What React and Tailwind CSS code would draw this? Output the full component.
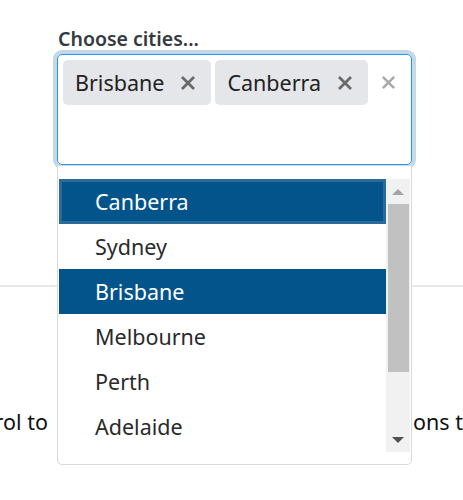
import React from "react";

const font = { fontFamily: '"Noto Sans", "Open Sans", sans-serif' };

function Cross({ size = 16, color = "#6b6b6b", sw = 2.6 }) {
  return (
    <svg width={size} height={size} viewBox="0 0 16 16">
      <path d="M2 2 L14 14 M14 2 L2 14" stroke={color} strokeWidth={sw} strokeLinecap="butt" />
    </svg>
  );
}

function Chip({ label }) {
  return (
    <div className="flex h-[45px] items-center rounded-[5px] bg-[#e4e6ea] pl-[12px] pr-[15px]">
      <span className="text-[21.5px] leading-none text-[#222]">{label}</span>
      <span className="ml-[16px] flex items-center">
        <Cross size={16} color="#6a6a6a" sw={2.8} />
      </span>
    </div>
  );
}

const items = [
  { name: "Canberra", sel: true, focus: true },
  { name: "Sydney" },
  { name: "Brisbane", sel: true },
  { name: "Melbourne" },
  { name: "Perth" },
  { name: "Adelaide" },
];

export default function App() {
  return (
    <div className="relative h-[500px] w-[463px] overflow-hidden bg-white" style={font}>
      <div className="pl-[57px] pt-[26px]">
        <div className="pl-[1px] text-[19.5px] font-semibold leading-[25px] text-[#343a40]">Choose cities...</div>
        <div className="mt-[3px] flex h-[111px] w-[355px] items-start rounded-[5px] border border-[#2196f3] p-[5px] shadow-[0_0_0_4px_#c4d8e7]">
          <div className="flex gap-[4px]">
            <Chip label="Brisbane" />
            <Chip label="Canberra" />
          </div>
          <div className="ml-[13px] flex h-[45px] items-center">
            <Cross size={15} color="#a8a8a8" sw={2.6} />
          </div>
        </div>
      </div>
      <div className="mt-[120px] h-[2px] w-full bg-[#e8e8ec]" />
      <div className="mt-[121px] flex whitespace-nowrap text-[21.5px] leading-[28px] text-[#111]">
        <div className="flex w-[48px] shrink-0 justify-end overflow-hidden">
          <span className="shrink-0">Use this control to</span>
        </div>
        <div className="ml-[365px] shrink-0">
          <span>ons to select</span>
        </div>
      </div>

      <div className="absolute left-[57px] top-[165px] h-[300px] w-[355px] rounded-b-[5px] border border-[#d9d9d9] bg-white pt-[13px]">
        <div className="flex h-[273px]">
          <div className="ml-[1px] w-[327px]">
            {items.map((it) => (
              <div
                key={it.name}
                className={
                  "flex h-[45px] items-center pt-[1px] text-[21.5px] " +
                  (it.sel ? "bg-[#02548a] text-white " : "text-[#2a2a2a] ") +
                  (it.focus ? "border-[3px] border-[#2a6b98] pl-[33px]" : "pl-[36px]")
                }
              >
                {it.name}
              </div>
            ))}
          </div>
          <div className="flex w-[24px] flex-col items-center bg-[#f1f1f1]">
            <div className="flex h-[25px] items-center justify-center">
              <svg width="12" height="8" viewBox="0 0 12 8"><path d="M0 7 L6 1 L12 7 Z" fill="#a3a3a3" /></svg>
            </div>
            <div className="h-[168px] w-[21px] bg-[#c1c1c1]" />
            <div className="flex-1" />
            <div className="flex h-[25px] items-center justify-center">
              <svg width="12" height="8" viewBox="0 0 12 8"><path d="M0 1 L6 7 L12 1 Z" fill="#505050" /></svg>
            </div>
          </div>
        </div>
      </div>
    </div>
  );
}
